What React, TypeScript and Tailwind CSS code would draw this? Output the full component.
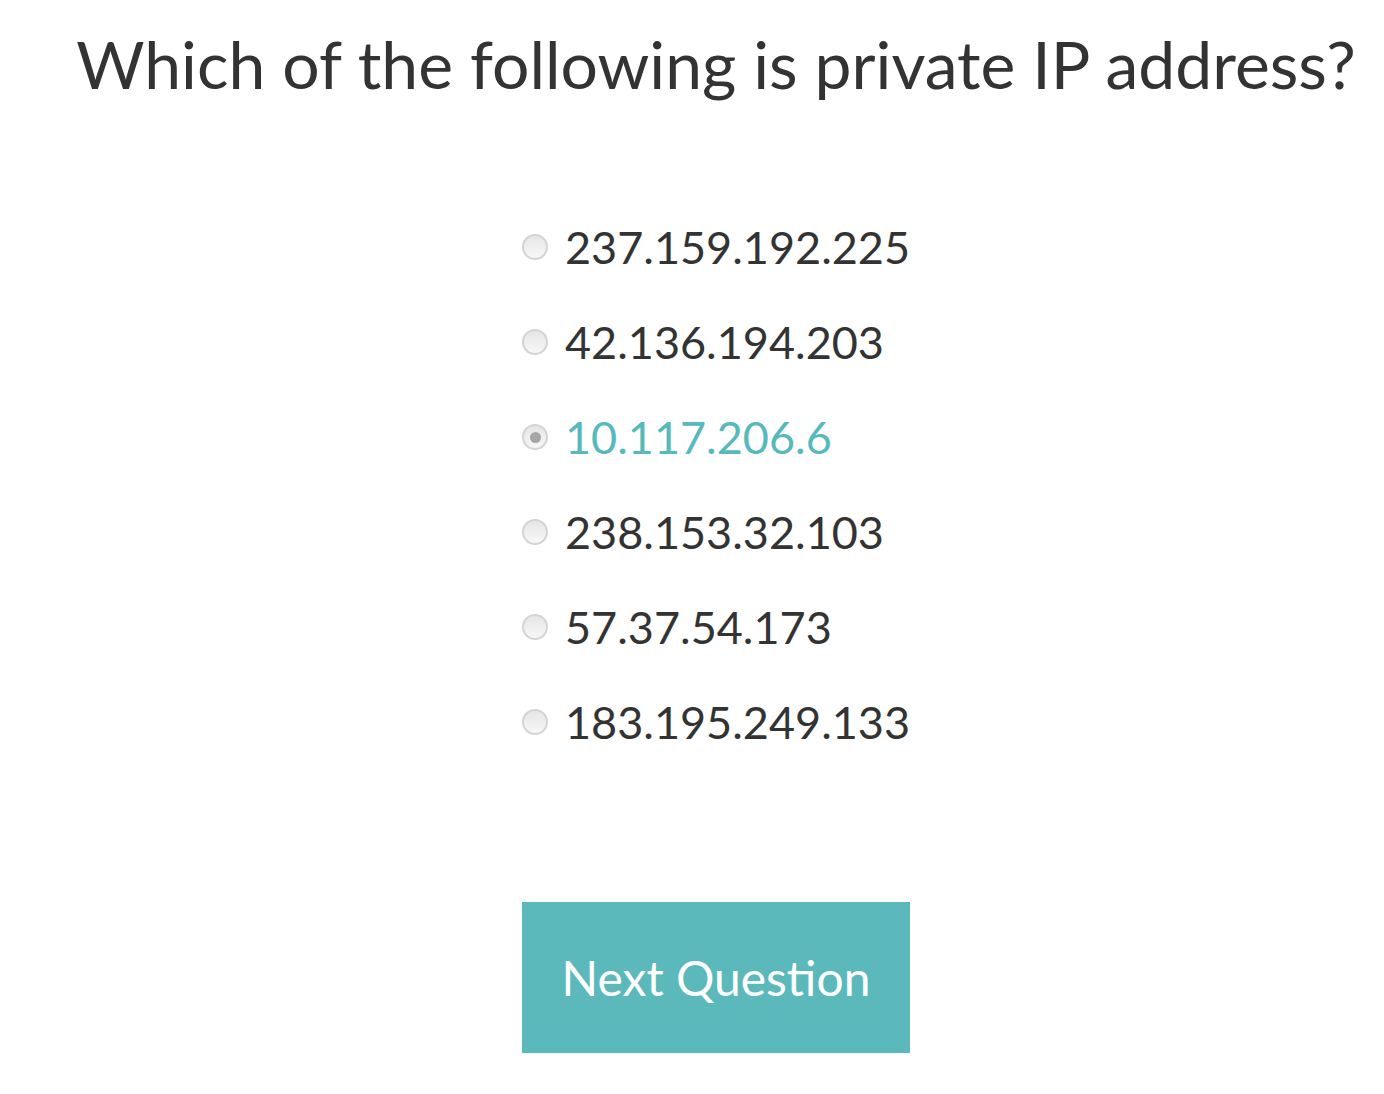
import React, { useState } from 'react';

const options = [
  '237.159.192.225',
  '42.136.194.203',
  '10.117.206.6',
  '238.153.32.103',
  '57.37.54.173',
  '183.195.249.133',
];

const Radio: React.FC<{ checked: boolean }> = ({ checked }) => (
  <span className="flex h-[26px] w-[26px] shrink-0 items-center justify-center rounded-full border-2 border-[#d4d4d4] bg-gradient-to-b from-[#e6e6e6] to-[#f7f7f7]">
    {checked && <span className="h-[11px] w-[11px] rounded-full bg-[#a6a6a6]" />}
  </span>
);

export default function App() {
  const [selected, setSelected] = useState(2);

  return (
    <div className="min-h-screen bg-white pl-[48px] text-[#333333] [font-family:Lato,'Liberation_Sans',sans-serif]">
      <div className="flex flex-col items-center">
        <h1 className="mt-[18px] whitespace-nowrap text-[66px] font-normal leading-[92px]">
          Which of the following is private IP address?
        </h1>

        <div className="mt-[104px] flex w-[388px] flex-col gap-[29px]">
          {options.map((opt, i) => (
            <label
              key={opt}
              onClick={() => setSelected(i)}
              className="flex h-[66px] cursor-pointer items-center gap-[17px]"
            >
              <Radio checked={selected === i} />
              <span
                className={
                  'text-[45px] leading-none ' +
                  (selected === i ? 'text-[#56b9bc]' : 'text-[#333333]')
                }
              >
                {opt}
              </span>
            </label>
          ))}
        </div>

        <button className="mt-[147px] h-[151px] w-[388px] bg-[#5bb8bb] text-[48px] text-white">
          Next Question
        </button>
      </div>
    </div>
  );
}
